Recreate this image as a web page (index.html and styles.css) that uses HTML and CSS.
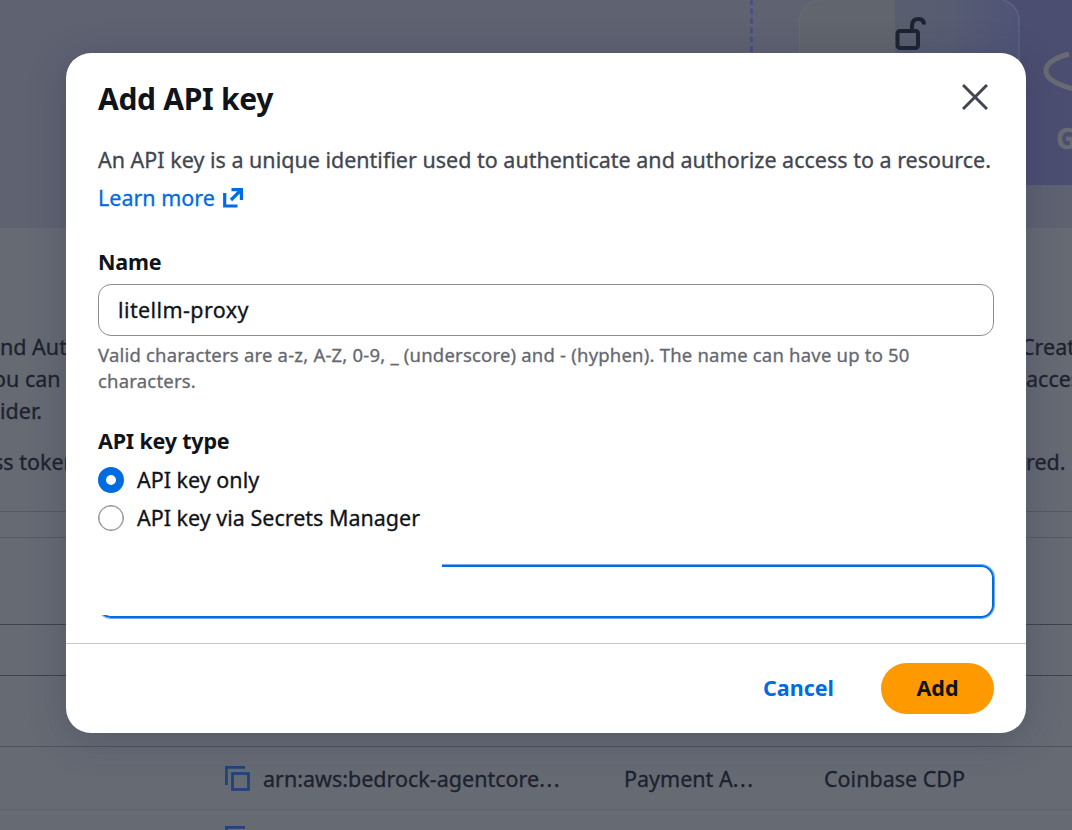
FILE: index.html
```html
<!DOCTYPE html>
<html lang="en">
<head>
    <meta charset="UTF-8">
    <meta name="viewport" content="width=device-width, initial-scale=1.0">
    <title>Add API key</title>
    <link rel="stylesheet" href="styles.css">
</head>
<body>
    <div class="page">
        <div class="hero">
            <svg class="diagram" width="1072" height="228" viewBox="0 0 1072 228">
                <defs>
                    <linearGradient id="cardFill" x1="0" x2="1" y1="0" y2="0">
                        <stop offset="0" stop-color="#585d6f"/>
                        <stop offset="0.45" stop-color="#575c72"/>
                        <stop offset="1" stop-color="#4f5376"/>
                    </linearGradient>
                </defs>
                <rect x="958" y="0" width="114" height="185" fill="#4c4e71"/>
                <path d="M799 60V22Q799 0 821 0H895V60Z" fill="#61656d"/>
                <path d="M895 0H997Q1019 0 1019 22V60H895Z" fill="url(#cardFill)"/>
                <path d="M799.500 60V22Q800 .5 821 .5" fill="none" stroke="#666a72"/>
                <path d="M1003 0Q1019 5 1019 22V60" fill="none" stroke="#5e6280" stroke-width="1.500"/>
                <path d="M751.500 0V54" stroke="#444f88" stroke-width="2.500" stroke-dasharray="6 3.400" stroke-dashoffset="1"/>
                <g fill="none" stroke="#1d2430" stroke-width="4">
                    <rect x="897.500" y="31" width="20.500" height="17" rx="2.500"/>
                    <path d="M912 30V26Q912 19 918.500 19Q924 19 924 24.500"/>
                </g>
                <path d="M1069 54Q1046 60 1046 71Q1046 82 1074 89" fill="none" stroke="#686b73" stroke-width="5"/>
            </svg>
            <span class="diagram-label">G</span>
        </div>
        <div class="intro">
            <p><span>nd Auth</span><span class="right">Creat</span></p>
            <p class="shifted"><span>ou can</span><span class="right">acces</span></p>
            <p><span>ider.</span></p>
            <p class="last"><span>ss token</span><span class="right">red.</span></p>
        </div>
        <div class="toolbar"></div>
        <div class="filters"></div>
        <div class="table-tabs"></div>
        <div class="table-head"></div>
        <div class="row">
            <svg class="copy" width="26" height="27" viewBox="0 0 26 27" fill="none" stroke="#24437a" stroke-width="2.800">
                <path d="M1.400 19V1.400H20"/>
                <rect x="7.500" y="7.500" width="16" height="16"/>
            </svg>
            <span class="arn">arn:aws:bedrock-agentcore<span class="dots">...</span></span>
            <span class="kind">Payment A<span class="dots">...</span></span>
            <span class="vendor">Coinbase CDP</span>
        </div>
        <div class="row next">
            <svg class="copy" width="26" height="27" viewBox="0 0 26 27" fill="none" stroke="#24437a" stroke-width="2.800">
                <path d="M1.400 19V1.400H20"/>
                <rect x="7.500" y="7.500" width="16" height="16"/>
            </svg>
        </div>
    </div>

    <div class="overlay">
        <div class="modal" role="dialog">
            <div class="modal-header">
                <h2>Add API key</h2>
                <svg class="close" width="26" height="26" viewBox="0 0 26 26" fill="none" stroke="#424650" stroke-width="3">
                    <path d="M1 1L25 25M25 1L1 25"/>
                </svg>
            </div>
            <div class="modal-body">
                <p class="description"><span>An API key is a unique identifier used to authenticate and authorize access to a resource.</span><br>
                    <a class="link"><span>Learn more</span>
                        <svg width="21" height="21" viewBox="0 0 21 21" fill="none" stroke="#006ce0" stroke-width="3.200">
                            <path d="M1.700 5V18H14.500M8.500 1.600H18.400V12M18.400 1.600L8 12"/>
                        </svg>
                    </a>
                </p>
                <label class="label name-label" for="name">Name</label>
                <input class="input" type="text" id="name" value="litellm-proxy">
                <div class="hint"><span>Valid characters are a-z, A-Z, 0-9, _ (underscore) and - (hyphen). The name can have up to 50</span><br>characters.</div>
                <div class="label type-label">API key type</div>
                <div class="radio"><span class="dot checked"></span><span>API key only</span></div>
                <div class="radio"><span class="dot"></span><span>API key via Secrets Manager</span></div>
                <div class="key-field"></div>
            </div>
            <div class="modal-footer">
                <button class="cancel">Cancel</button>
                <button class="add">Add</button>
            </div>
        </div>
    </div>
</body>
</html>
```
FILE: styles.css
```css
* {
    box-sizing: border-box;
}
body {
    margin: 0;
    height: 830px;
    overflow: hidden;
    font-family: "Noto Sans", "Open Sans", sans-serif;
    font-size: 21.5px;
    line-height: 32px;
    color: #0f141a;
    background-color: #666a73;
    -webkit-text-stroke: 0.3px;
}
p, h2 {
    margin: 0;
}
.page {
    height: 830px;
    overflow: hidden;
    color: #1d222e;
}
.hero {
    position: relative;
    height: 228px;
    background-color: #5f6271;
}
.diagram {
    display: block;
}
.diagram-label {
    position: absolute;
    left: 1056px;
    top: 122px;
    font-size: 28px;
    font-weight: 700;
    color: #686b73;
}
.intro {
    height: 284px;
    padding-top: 103px;
    border-bottom: 1px solid #555963;
    white-space: nowrap;
}
.intro p {
    display: flex;
    height: 32px;
}
.intro p span:first-child {
    flex: none;
    width: 1021px;
}
.intro .last {
    margin-top: 19px;
}
.intro .shifted, .intro .last {
    margin-left: -7px;
}
.intro p + p .right {
    padding-left: 12px;
}
.toolbar {
    height: 26px;
    border-bottom: 1px solid #555963;
}
.filters {
    height: 87px;
    border-bottom: 1px solid #3e424e;
}
.table-tabs {
    height: 51px;
    border-bottom: 1px solid #3e424e;
}
.table-head {
    height: 71px;
    border-bottom: 1px solid #4f535d;
}
.row {
    display: flex;
    align-items: center;
    height: 63px;
    padding: 2px 0 0 225px;
    border-bottom: 1px solid #5c606b;
    white-space: nowrap;
}
.row.next {
    height: 60px;
    padding-top: 0;
}
.row .copy {
    flex: none;
    margin-right: 12px;
}
.row .arn {
    width: 361px;
}
.row .kind {
    width: 200px;
}
.row .dots {
    letter-spacing: 1.5px;
}
.overlay {
    position: absolute;
    left: 0;
    top: 0;
    width: 1072px;
    height: 830px;
    padding: 53px 46px 0 66px;
}
.modal {
    width: 960px;
    height: 680px;
    background-color: #fff;
    border-radius: 25px;
    box-shadow: 0 6px 36px rgba(40, 46, 75, 0.3);
}
.modal-header {
    display: flex;
    justify-content: space-between;
    height: 88px;
    padding: 26px 38px 0 32px;
}
.modal-header h2 {
    font-size: 30px;
    line-height: 40px;
    font-weight: 700;
    letter-spacing: -0.3px;
    -webkit-text-stroke: 0;
}
.close {
    margin-top: 5px;
}
.modal-body {
    height: 502px;
    padding: 0 32px;
}
.description {
    line-height: 38px;
    color: #424650;
    white-space: nowrap;
}
.link {
    display: inline-flex;
    align-items: center;
    gap: 8px;
    height: 38px;
    color: #006ce0;
}
.label {
    display: block;
    font-weight: 700;
    letter-spacing: -0.2px;
    -webkit-text-stroke: 0;
}
.name-label {
    margin: 29px 0 6px;
}
.input {
    display: block;
    width: 896px;
    height: 52px;
    padding: 0 19px 2px;
    border: 1px solid #8c8c94;
    border-radius: 13px;
    font: inherit;
    letter-spacing: 0.4px;
    color: #0f141a;
    outline: none;
}
.hint {
    margin-top: 6px;
    font-size: 18.500px;
    line-height: 26px;
    letter-spacing: 0.2px;
    color: #656871;
    white-space: nowrap;
}
.type-label {
    margin-top: 31px;
    margin-bottom: 7px;
}
.radio {
    display: flex;
    align-items: center;
    gap: 13px;
    margin-bottom: 6px;
}
.dot {
    width: 26px;
    height: 26px;
    border: 1px solid #8c8c94;
    border-radius: 50%;
    box-shadow: inset 0 0 0 0.5px #8c8c94;
}
.dot.checked {
    border: 8px solid #006ce0;
    box-shadow: none;
}
.key-field {
    width: 896px;
    height: 53px;
    margin: 31px 0 0;
    border: 2px solid #006ce0;
    border-radius: 13px;
    box-shadow: 0 0 0 1px #73abec;
    /* only the right end and the bottom edge of the ring stay visible */
    clip-path: polygon(344px -1px, 897px -1px, 897px 54px, -1px 54px, -1px 50px, 344px 50px);
}
.modal-footer {
    display: flex;
    justify-content: flex-end;
    align-items: center;
    height: 90px;
    padding: 0 32px;
    border-top: 1px solid #c6c6cd;
}
.modal-footer button {
    height: 51px;
    padding: 0 0 2px;
    border: none;
    border-radius: 26px;
    font: inherit;
    font-weight: 700;
    -webkit-text-stroke: 0;
}
.modal-footer .cancel {
    width: 117px;
    margin-right: 24px;
    background: none;
    color: #006ce0;
}
.modal-footer .add {
    width: 113px;
    background-color: #ff9900;
    color: #0f141a;
}
```
